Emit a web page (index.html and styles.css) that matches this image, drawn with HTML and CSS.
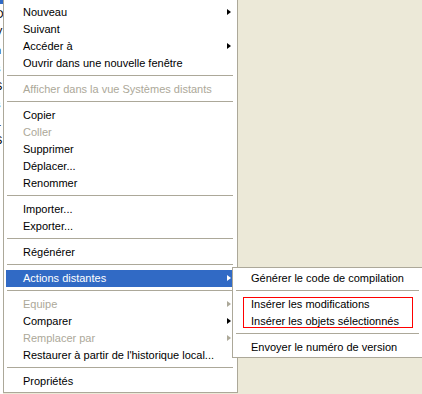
FILE: index.html
```html
<!DOCTYPE html>
<html lang="fr">
<head>
<meta charset="utf-8">
<title>Menu contextuel</title>
<link rel="stylesheet" href="styles.css">
</head>
<body>
<div class="desktop">
  <div class="behind">
    <div class="sel"></div>
    <div class="bline">O</div>
    <div class="bline">V</div>
    <div class="bline">n</div>
    <div class="bline">s</div>
    <div class="bline">S</div>
    <div class="bline">s</div>
    <div class="bline">L</div>
    <div class="bline">S</div>
  </div>

  <div class="menu main">
    <div class="item sub-arrow">Nouveau</div>
    <div class="item">Suivant</div>
    <div class="item sub-arrow">Accéder à</div>
    <div class="item">Ouvrir dans une nouvelle fenêtre</div>
    <div class="sep"></div>
    <div class="item disabled">Afficher dans la vue Systèmes distants</div>
    <div class="sep"></div>
    <div class="item">Copier</div>
    <div class="item disabled">Coller</div>
    <div class="item">Supprimer</div>
    <div class="item">Déplacer...</div>
    <div class="item">Renommer</div>
    <div class="sep"></div>
    <div class="item">Importer...</div>
    <div class="item">Exporter...</div>
    <div class="sep"></div>
    <div class="item">Régénérer</div>
    <div class="sep"></div>
    <div class="item sub-arrow active">Actions distantes</div>
    <div class="sep"></div>
    <div class="item sub-arrow disabled">Equipe</div>
    <div class="item sub-arrow">Comparer</div>
    <div class="item sub-arrow disabled">Remplacer par</div>
    <div class="item">Restaurer à partir de l'historique local...</div>
    <div class="sep"></div>
    <div class="item">Propriétés</div>
  </div>

  <div class="menu submenu">
    <div class="item">Générer le code de compilation</div>
    <div class="sep"></div>
    <div class="item">Insérer les modifications</div>
    <div class="item">Insérer les objets sélectionnés</div>
    <div class="sep"></div>
    <div class="item">Envoyer le numéro de version</div>
  </div>

  <div class="mark"></div>
</div>
</body>
</html>
```

FILE: styles.css
```css
html, body {
  margin: 0;
  padding: 0;
}

body {
  background: #ECE9D8;
  font-family: "Liberation Sans", Arial, sans-serif;
  font-size: 11px;
  color: #000;
}

.desktop {
  position: relative;
  width: 422px;
  height: 394px;
  overflow: hidden;
  background: #ECE9D8;
}

.behind {
  position: absolute;
  left: 0;
  top: 0;
  width: 3px;
  height: 394px;
  background: #fff;
  overflow: hidden;
}

.sel {
  width: 3px;
  height: 4px;
  background: #316AC5;
}

.bline {
  margin-left: -5px;
  margin-top: 2px;
  height: 16px;
  line-height: 16px;
  font-size: 11px;
}

.menu {
  position: absolute;
  background: #fff;
  border: 1px solid #ACA899;
  box-sizing: border-box;
}

.main {
  left: 3px;
  top: -2px;
  width: 235px;
  padding: 5px 3px 2px 2px;
}

.submenu {
  left: 232px;
  top: 267px;
  width: 192px;
  padding: 2px 3px 1px 2px;
}

.item {
  position: relative;
  height: 17px;
  line-height: 17px;
  padding-left: 17px;
  white-space: nowrap;
}

.submenu .item {
  padding-left: 16px;
}

.item.disabled {
  color: #ACA899;
}

.item.active {
  background: #316AC5;
  color: #fff;
}

.sub-arrow::after {
  content: "";
  position: absolute;
  right: 3px;
  top: 5px;
  width: 0;
  height: 0;
  border-top: 3.5px solid transparent;
  border-bottom: 3.5px solid transparent;
  border-left: 4px solid #000;
}

.sub-arrow.disabled::after {
  border-left-color: #ACA899;
}

.sub-arrow.active::after {
  border-left-color: #fff;
}

.sep {
  height: 9px;
  box-sizing: border-box;
  padding: 3px 1px 5px 1px;
}

.sep::before {
  content: "";
  display: block;
  height: 1px;
  background: #ACA899;
}

.mark {
  position: absolute;
  left: 243px;
  top: 297px;
  width: 170px;
  height: 31px;
  box-sizing: border-box;
  border: 1px solid #FF0000;
}
```
